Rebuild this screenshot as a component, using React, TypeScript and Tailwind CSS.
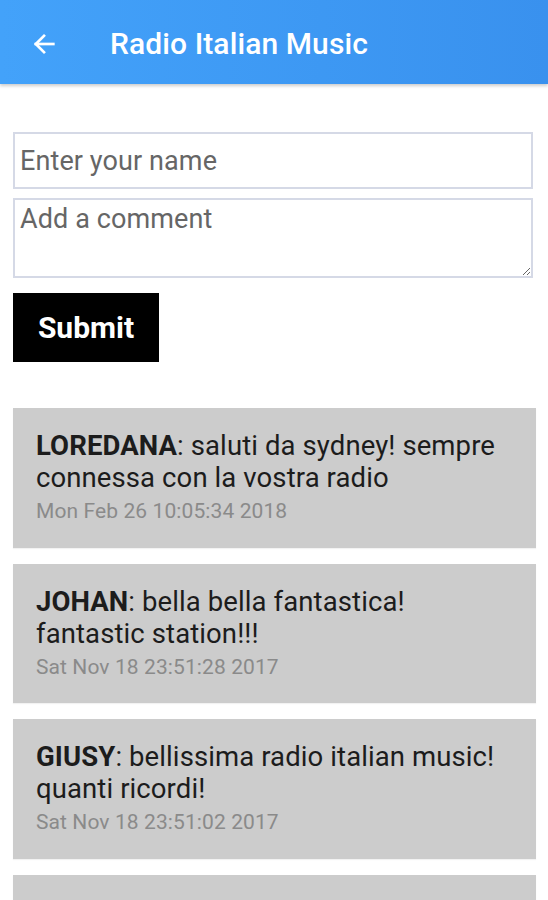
import React from "react";

const comments = [
  { name: "LOREDANA", text: "saluti da sydney! sempre connessa con la vostra radio", date: "Mon Feb 26 10:05:34 2018" },
  { name: "JOHAN", text: "bella bella fantastica! fantastic station!!!", date: "Sat Nov 18 23:51:28 2017" },
  { name: "GIUSY", text: "bellissima radio italian music! quanti ricordi!", date: "Sat Nov 18 23:51:02 2017" },
  { name: "MARIO", text: "grazie per la bella musica", date: "Sat Nov 18 23:50:11 2017" },
];

export default function App() {
  return (
    <div className="w-[548px] h-[900px] overflow-hidden bg-white" style={{ fontFamily: "Roboto, 'Noto Sans', sans-serif" }}>
      <header className="h-[84px] flex items-center pt-[3px] bg-gradient-to-r from-[#43a2fa] to-[#3991ee] shadow-[0_2px_3px_rgba(0,0,0,0.2)] relative z-10">
        <div className="w-[110px] flex items-center pl-[30px]">
          <svg width="28" height="28" viewBox="0 0 24 24" fill="none" stroke="white" strokeWidth="2.3" strokeLinecap="square">
            <path d="M20 12H5" />
            <path d="M12 5l-7 7 7 7" />
          </svg>
        </div>
        <h1 className="text-white text-[30px] font-medium tracking-[0.1px]">Radio Italian Music</h1>
      </header>
      <div className="px-[13px] pt-[48px]">
        <input
          className="block w-[520px] h-[57px] border-2 border-[#d5d9e6] px-[5px] text-[27px] tracking-[0.1px] text-[#222] placeholder:text-[#666] outline-none"
          placeholder="Enter your name"
        />
        <textarea
          className="block mt-[9px] w-[520px] h-[80px] border-2 border-[#d5d9e6] px-[5px] pt-[0px] text-[27px] tracking-[0.1px] leading-[38px] text-[#222] placeholder:text-[#666] outline-none resize-y"
          placeholder="Add a comment"
        />
        <button className="mt-[15px] w-[146px] h-[69px] bg-black text-white font-bold text-[30px]">Submit</button>
        <div className="mt-[46px] flex flex-col gap-[16px] w-[523px]">
          {comments.map((c) => (
            <div key={c.date} className="bg-[#cccccc] h-[139.5px] shrink-0 pl-[23px] pr-[34px] pt-[22px] shadow-[0_1px_1px_rgba(0,0,0,0.05)]">
              <p className="text-[27.5px] leading-[32px] tracking-[0.1px] text-[#1c1c1c]">
                <span className="font-bold">{c.name}</span>: {c.text}
              </p>
              <p className="text-[21px] leading-[34px] tracking-[0.1px] text-[#8a8a8a]">{c.date}</p>
            </div>
          ))}
        </div>
      </div>
    </div>
  );
}
